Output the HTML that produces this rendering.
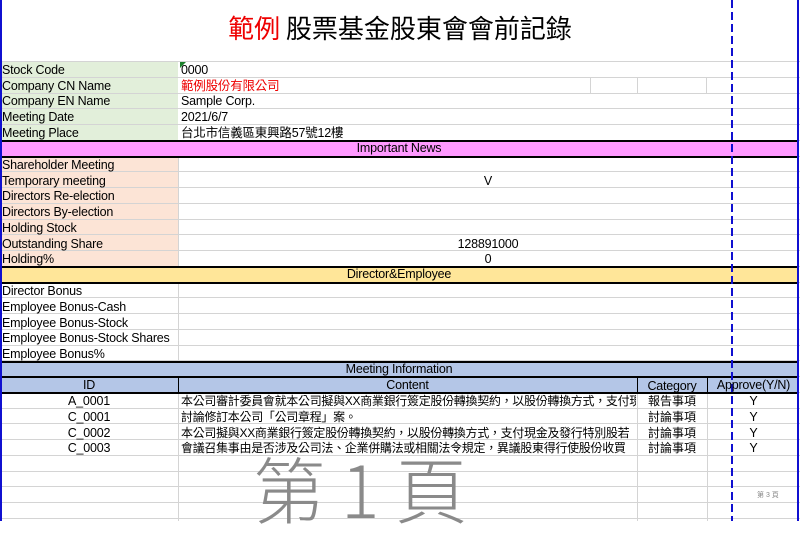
<!DOCTYPE html>
<html><head><meta charset="utf-8"><style>
*{margin:0;padding:0;box-sizing:border-box}
body{width:800px;height:521px;overflow:hidden;background:#fff;position:relative;font-family:"Liberation Sans","Noto Sans CJK TC",sans-serif;font-size:12px;color:#000}
.a{position:absolute}
.t{position:absolute;white-space:nowrap;line-height:15px;font-size:12.5px;letter-spacing:-0.2px}
.hl{position:absolute;left:0;width:798px;height:2px;background:#000}
</style></head><body>
<div class="a" style="left:0;top:10px;width:800px;text-align:center;font-size:26px;line-height:36px;font-family:'Noto Sans CJK TC',sans-serif"><span style="color:#e00">範例</span> 股票基金股東會會前記錄</div>

<div class="a" style="left:0;top:62px;width:178px;height:79px;background:#e2efda"></div>
<div class="a" style="left:0;top:157px;width:178px;height:110px;background:#fce4d6"></div>
<div class="a" style="left:0;top:141px;width:798px;height:16px;background:#ff99ff"></div>
<div class="a" style="left:0;top:267px;width:798px;height:16px;background:#ffe699"></div>
<div class="a" style="left:0;top:362px;width:798px;height:31px;background:#b4c6e7"></div>
<div class="a" style="left:180px;top:62px;width:0;height:0;border-top:6px solid #1a7f2a;border-right:6px solid transparent"></div>

<div id="g"></div>
<script>
var g=document.getElementById('g'),h='';
for(var i=0;i<30;i++){var y=62+i*15.75;h+='<div class="a" style="left:0;top:'+(y-1)+'px;width:800px;height:1px;background:#d4d4d4"></div>';}
g.innerHTML=h;
</script>
<div class="a" style="left:178px;top:157px;width:1px;height:110px;background:#d4d4d4"></div>
<div class="a" style="left:178px;top:283px;width:1px;height:79px;background:#d4d4d4"></div>
<div class="a" style="left:590px;top:78px;width:1px;height:16px;background:#d4d4d4"></div>
<div class="a" style="left:637px;top:78px;width:1px;height:16px;background:#d4d4d4"></div>
<div class="a" style="left:706px;top:78px;width:1px;height:16px;background:#d4d4d4"></div>
<div class="a" style="left:178px;top:377px;width:1px;height:144px;background:#d4d4d4"></div>
<div class="a" style="left:637px;top:377px;width:1px;height:144px;background:#d4d4d4"></div>
<div class="a" style="left:707px;top:377px;width:1px;height:144px;background:#d4d4d4"></div>
<div class="a" style="left:178px;top:377px;width:1px;height:16px;background:#000"></div>
<div class="a" style="left:637px;top:377px;width:1px;height:16px;background:#000"></div>
<div class="a" style="left:707px;top:377px;width:1px;height:16px;background:#000"></div>

<div class="hl" style="top:140px"></div><div class="hl" style="top:156px"></div>
<div class="hl" style="top:266px"></div><div class="hl" style="top:282px"></div>
<div class="hl" style="top:361px"></div><div class="hl" style="top:376px"></div><div class="hl" style="top:392px"></div>

<div class="a" style="left:0;top:0;width:2px;height:521px;background:#1010d0"></div>
<div class="a" style="left:797px;top:0;width:2px;height:521px;background:#1010d0"></div>
<div class="a" style="left:731px;top:0;width:2px;height:521px;background:repeating-linear-gradient(#1010d0 0 8px,transparent 8px 12px)"></div>

<div class="t" style="left:2px;top:63px">Stock Code</div>
<div class="t" style="left:2px;top:79px">Company CN Name</div>
<div class="t" style="left:2px;top:94px">Company EN Name</div>
<div class="t" style="left:2px;top:110px">Meeting Date</div>
<div class="t" style="left:2px;top:126px">Meeting Place</div>
<div class="t" style="left:181px;top:63px">0000</div>
<div class="t" style="left:181px;top:79px;color:#e00">範例股份有限公司</div>
<div class="t" style="left:181px;top:94px">Sample Corp.</div>
<div class="t" style="left:181px;top:110px">2021/6/7</div>
<div class="t" style="left:181px;top:126px">台北市信義區東興路57號12樓</div>
<div class="t" style="left:0;width:798px;text-align:center;top:141px">Important News</div>
<div class="t" style="left:2px;top:158px">Shareholder Meeting</div>
<div class="t" style="left:2px;top:174px">Temporary meeting</div>
<div class="t" style="left:2px;top:189px">Directors Re-election</div>
<div class="t" style="left:2px;top:205px">Directors By-election</div>
<div class="t" style="left:2px;top:221px">Holding Stock</div>
<div class="t" style="left:2px;top:237px">Outstanding Share</div>
<div class="t" style="left:2px;top:252px">Holding%</div>
<div class="t" style="left:178px;width:620px;text-align:center;top:174px">V</div>
<div class="t" style="left:178px;width:620px;text-align:center;top:237px">128891000</div>
<div class="t" style="left:178px;width:620px;text-align:center;top:252px">0</div>
<div class="t" style="left:0;width:798px;text-align:center;top:267px">Director&amp;Employee</div>
<div class="t" style="left:2px;top:284px">Director Bonus</div>
<div class="t" style="left:2px;top:300px">Employee Bonus-Cash</div>
<div class="t" style="left:2px;top:316px">Employee Bonus-Stock</div>
<div class="t" style="left:2px;top:331px">Employee Bonus-Stock Shares</div>
<div class="t" style="left:2px;top:347px">Employee Bonus%</div>
<div class="t" style="left:0;width:798px;text-align:center;top:362px">Meeting Information</div>
<div class="t" style="left:0;width:178px;text-align:center;top:378px">ID</div>
<div class="t" style="left:178px;width:459px;text-align:center;top:378px">Content</div>
<div class="t" style="left:637px;width:70px;text-align:center;top:379px">Category</div>
<div class="t" style="left:707px;width:93px;text-align:center;top:378px">Approve(Y/N)</div>

<div class="t" style="left:0;width:178px;text-align:center;top:394px">A_0001</div>
<div class="t" style="left:0;width:178px;text-align:center;top:410px">C_0001</div>
<div class="t" style="left:0;width:178px;text-align:center;top:426px">C_0002</div>
<div class="t" style="left:0;width:178px;text-align:center;top:441px">C_0003</div>
<div class="a" style="left:181px;top:394px;width:455px;overflow:hidden;font-size:12px;line-height:15.75px;white-space:nowrap;letter-spacing:-0.3px">本公司審計委員會就本公司擬與XX商業銀行簽定股份轉換契約，以股份轉換方式，支付現金<br>討論修訂本公司「公司章程」案。<br>本公司擬與XX商業銀行簽定股份轉換契約，以股份轉換方式，支付現金及發行特別股若<br>會議召集事由是否涉及公司法、企業併購法或相關法令規定，異議股東得行使股份收買</div>
<div class="a" style="left:637px;top:394px;width:70px;text-align:center;font-size:12px;line-height:15.75px">報告事項<br>討論事項<br>討論事項<br>討論事項</div>
<div class="a" style="left:707px;top:394px;width:93px;text-align:center;font-size:12.5px;line-height:15.75px">Y<br>Y<br>Y<br>Y</div>

<div class="a" style="left:253px;top:446px;font-size:72px;line-height:82px;color:#8a8a8a;white-space:nowrap;font-family:'Noto Sans CJK TC',sans-serif;font-weight:300">第 1 頁</div>
<div class="a" style="left:757px;top:490px;font-size:7px;color:#888">第 3 頁</div>
</body></html>
